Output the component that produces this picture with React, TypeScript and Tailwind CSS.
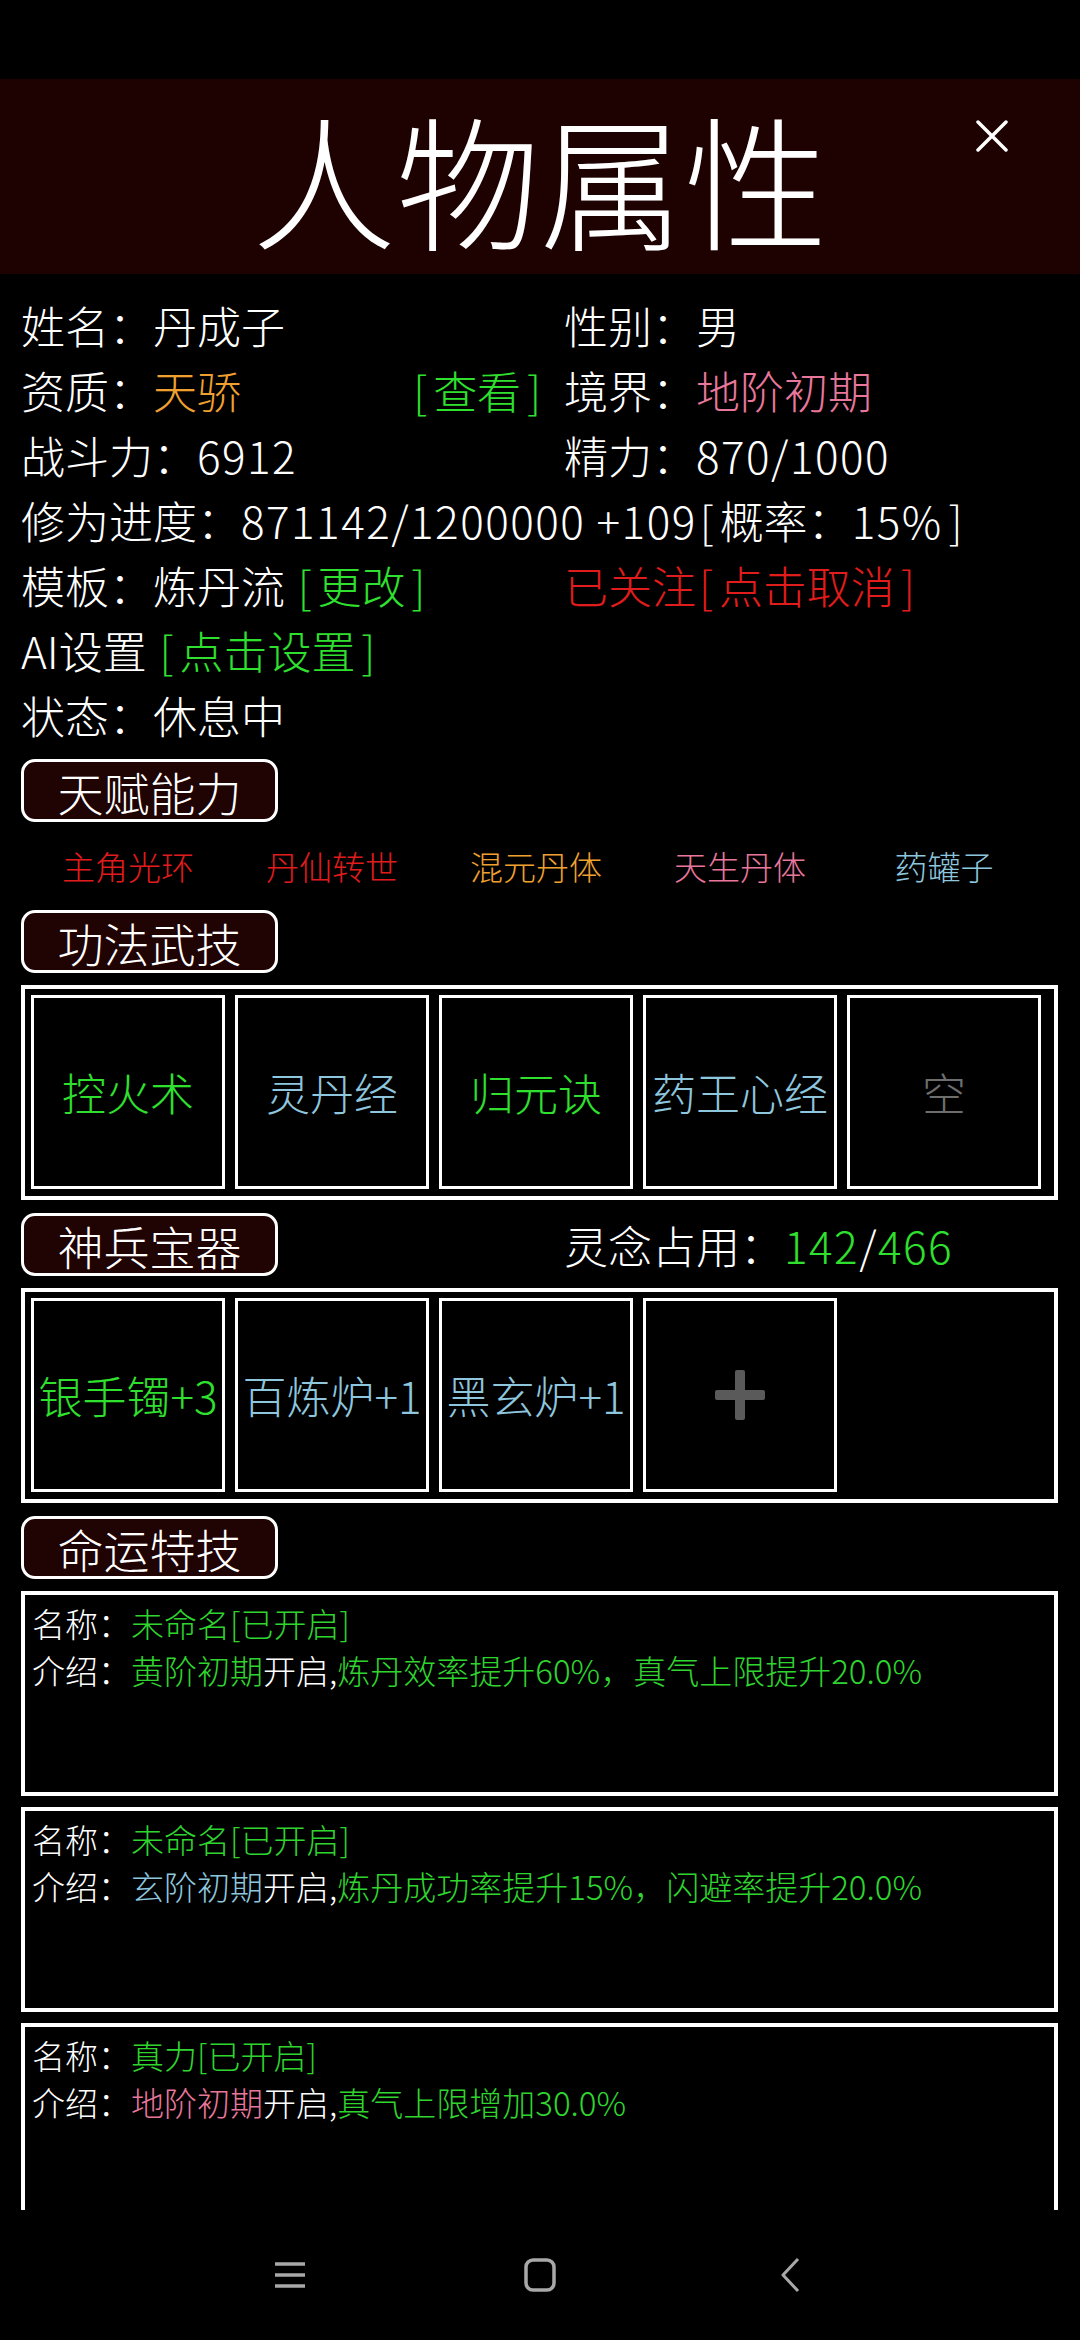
import React from 'react';

const Tag = ({ label }: { label: string }) => (
  <div className="flex h-[63px] w-[257px] shrink-0 items-center justify-center rounded-[14px] border-[3px] border-white bg-[#200303] text-[46px] leading-none text-white">
    {label}
  </div>
);

const Row = ({ children }: { children: React.ReactNode }) => (
  <div className="grid h-[65px] grid-cols-[543px_1fr] whitespace-nowrap text-[44px] leading-[65px] text-white">
    {children}
  </div>
);

// brackets in the reference font are wider than Noto's ASCII ones
const Br = ({ children }: { children: React.ReactNode }) => (
  <span>
    <span className="pl-[3px] pr-[6px]">[</span>
    {children}
    <span className="pl-[6px] pr-[3px]">]</span>
  </span>
);

const Num = ({ children }: { children: React.ReactNode }) => (
  <span className="tracking-[1.5px]">{children}</span>
);

const talents = [
  { name: '主角光环', color: 'text-[#e01c1c]' },
  { name: '丹仙转世', color: 'text-[#e01c1c]' },
  { name: '混元丹体', color: 'text-[#f0a030]' },
  { name: '天生丹体', color: 'text-[#e8779b]' },
  { name: '药罐子', color: 'text-[#8ec6de]' },
];

const skills = [
  { name: '控火术', color: 'text-[#2fe02f]' },
  { name: '灵丹经', color: 'text-[#8ec6de]' },
  { name: '归元诀', color: 'text-[#2fe02f]' },
  { name: '药王心经', color: 'text-[#8ec6de]' },
  { name: '空', color: 'text-[#6e6e6e]' },
];

const treasures = [
  { name: '银手镯+3', color: 'text-[#2fe02f]' },
  { name: '百炼炉+1', color: 'text-[#8ec6de]' },
  { name: '黑玄炉+1', color: 'text-[#8ec6de]' },
];

function Card({ children }: { children: React.ReactNode }) {
  return (
    <div className="h-[205px] w-[1037px] shrink-0 border-4 border-white pl-[7px] pt-[5px] text-[33px] leading-[47px] text-white whitespace-nowrap">
      {children}
    </div>
  );
}

export default function App() {
  return (
    <div className="flex h-[2340px] w-[1080px] flex-col overflow-hidden bg-black font-['Noto_Sans_CJK_SC','Noto_Sans',sans-serif] font-light">
      <div className="h-[79px] shrink-0" />

      <header className="relative flex h-[195px] shrink-0 items-center justify-center bg-[#1e0101]">
        <h1 className="text-[144px] font-light leading-none text-white">人物属性</h1>
        <button className="absolute right-[72px] top-[41px] h-[32px] w-[32px]">
          <svg viewBox="0 0 32 32" className="h-full w-full">
            <path d="M2 2 L30 30 M30 2 L2 30" stroke="white" strokeWidth="3.5" strokeLinecap="round" />
          </svg>
        </button>
      </header>

      <main className="min-h-0 flex-1 overflow-hidden pl-[21px] pt-[19px]">
        <Row>
          <span>姓名：丹成子</span>
          <span>性别：男</span>
        </Row>
        <Row>
          <span className="flex justify-between pr-[20px]">
            <span>
              资质：<span className="text-[#f0a030]">天骄</span>
            </span>
            <span className="text-[#2fe02f]">
              <Br>查看</Br>
            </span>
          </span>
          <span>
            境界：<span className="text-[#e8779b]">地阶初期</span>
          </span>
        </Row>
        <Row>
          <span>
            战斗力：<Num>6912</Num>
          </span>
          <span>
            精力：<Num>870/1000</Num>
          </span>
        </Row>
        <div className="h-[65px] whitespace-nowrap text-[44px] leading-[65px] text-white">
          修为进度：<Num>871142/1200000 +109</Num>
          <Br>
            概率：<Num>15%</Num>
          </Br>
        </div>
        <Row>
          <span>
            模板：炼丹流{' '}
            <span className="text-[#2fe02f]">
              <Br>更改</Br>
            </span>
          </span>
          <span className="text-[#e01c1c]">
            已关注<Br>点击取消</Br>
          </span>
        </Row>
        <div className="h-[65px] whitespace-nowrap text-[44px] leading-[65px] text-white">
          AI设置{' '}
          <span className="text-[#2fe02f]">
            <Br>点击设置</Br>
          </span>
        </div>
        <div className="h-[65px] whitespace-nowrap text-[44px] leading-[65px] text-white">状态：休息中</div>

        <div className="mt-[11px]">
          <Tag label="天赋能力" />
        </div>
        <div className="ml-[5px] grid h-[88px] w-[1020px] grid-cols-5 items-center text-[33px] leading-none">
          {talents.map((t) => (
            <div key={t.name} className={`text-center ${t.color}`}>
              {t.name}
            </div>
          ))}
        </div>

        <Tag label="功法武技" />
        <div className="mt-[12px] flex w-[1037px] gap-[10px] border-4 border-white px-[6px] pb-[7px] pt-[6px]">
          {skills.map((s) => (
            <div
              key={s.name}
              className={`flex h-[194px] w-[194px] items-center justify-center border-[3px] border-white text-[44px] leading-none ${s.color}`}
            >
              {s.name}
            </div>
          ))}
        </div>

        <div className="mt-[13px] flex items-center">
          <Tag label="神兵宝器" />
          <div className="ml-[286px] whitespace-nowrap text-[44px] leading-none text-white">
            灵念占用：
            <span className="tracking-[1.5px] text-[#2fe02f]">142</span>
            <span className="tracking-[1.5px]">/</span>
            <span className="tracking-[1.5px] text-[#2fe02f]">466</span>
          </div>
        </div>
        <div className="mt-[12px] flex w-[1037px] gap-[10px] border-4 border-white px-[6px] pb-[7px] pt-[6px]">
          {treasures.map((t) => (
            <div
              key={t.name}
              className={`flex h-[194px] w-[194px] items-center justify-center whitespace-nowrap border-[3px] border-white text-[44px] leading-none ${t.color}`}
            >
              {t.name}
            </div>
          ))}
          <div className="flex h-[194px] w-[194px] items-center justify-center border-[3px] border-white">
            <svg viewBox="0 0 50 50" className="h-[50px] w-[50px]">
              <rect x="20" y="0" width="10" height="50" rx="2" fill="#5a5a5a" />
              <rect x="0" y="20" width="50" height="10" rx="2" fill="#5a5a5a" />
            </svg>
          </div>
        </div>

        <div className="mt-[13px]">
          <Tag label="命运特技" />
        </div>
        <div className="mt-[12px] flex flex-col gap-[11px]">
          <Card>
            <div>
              名称：<span className="text-[#2fd42f]">未命名[已开启]</span>
            </div>
            <div>
              介绍：<span className="text-[#2fd42f]">黄阶初期</span>开启,
              <span className="text-[#2fd42f]">炼丹效率提升60%，真气上限提升20.0%</span>
            </div>
          </Card>
          <Card>
            <div>
              名称：<span className="text-[#2fd42f]">未命名[已开启]</span>
            </div>
            <div>
              介绍：<span className="text-[#8ec6de]">玄阶初期</span>开启,
              <span className="text-[#2fd42f]">炼丹成功率提升15%，闪避率提升20.0%</span>
            </div>
          </Card>
          <Card>
            <div>
              名称：<span className="text-[#2fd42f]">真力[已开启]</span>
            </div>
            <div>
              介绍：<span className="text-[#e8779b]">地阶初期</span>开启,
              <span className="text-[#2fd42f]">真气上限增加30.0%</span>
            </div>
          </Card>
        </div>
      </main>

      <nav className="flex h-[130px] shrink-0 items-center justify-center bg-black">
        <div className="flex w-[250px] justify-center">
          <svg viewBox="0 0 32 26" className="h-[26px] w-[32px]">
            <path d="M1 2 H31 M1 13 H31 M1 24 H31" stroke="#a8a8a8" strokeWidth="3.5" />
          </svg>
        </div>
        <div className="flex w-[250px] justify-center">
          <svg viewBox="0 0 32 34" className="h-[34px] w-[32px]">
            <rect x="2" y="2" width="28" height="30" rx="7" fill="none" stroke="#a8a8a8" strokeWidth="3.5" />
          </svg>
        </div>
        <div className="flex w-[250px] justify-center">
          <svg viewBox="0 0 20 34" className="h-[34px] w-[20px]">
            <path d="M18 1 L3 17 L18 33" fill="none" stroke="#a8a8a8" strokeWidth="3" strokeLinejoin="round" />
          </svg>
        </div>
      </nav>
    </div>
  );
}
